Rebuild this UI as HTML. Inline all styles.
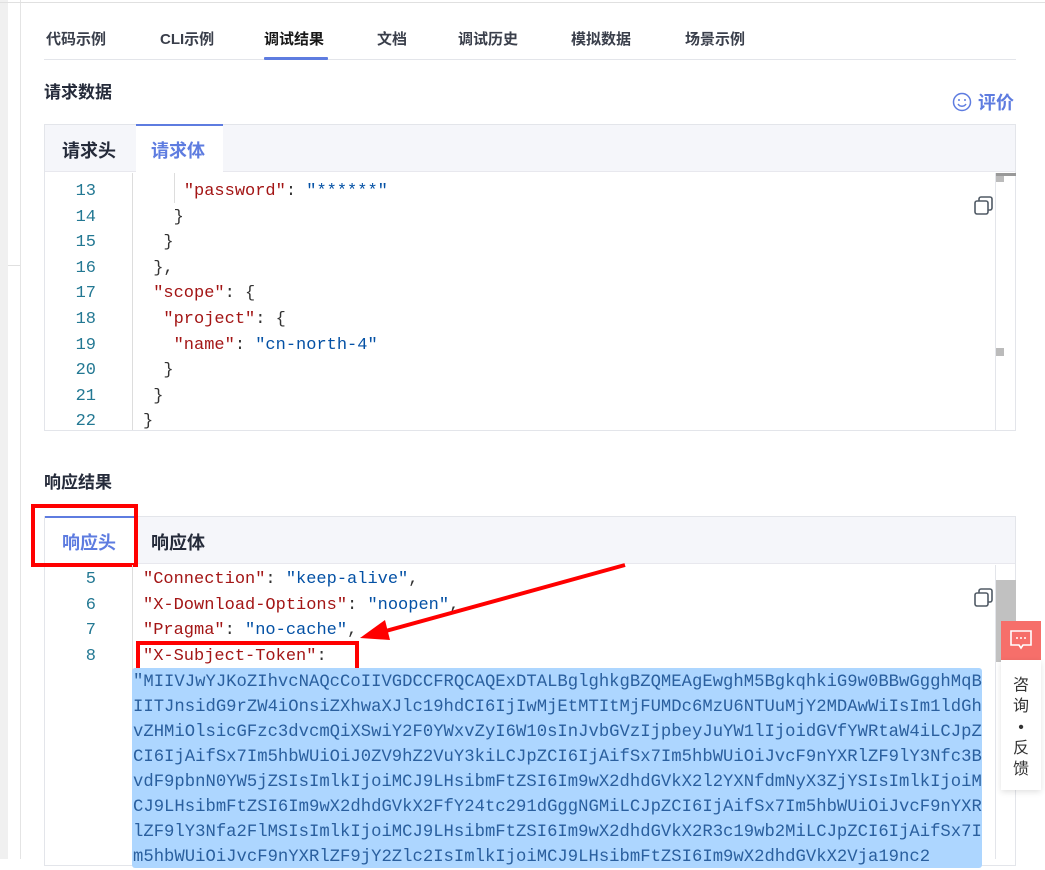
<!DOCTYPE html>
<html><head><meta charset="utf-8"><style>
*{margin:0;padding:0;box-sizing:border-box}
body{width:1045px;height:859px;overflow:hidden;background:#fff;position:relative;font-family:"Liberation Sans","Noto Sans CJK SC",sans-serif;color:#252b3a}
.a{position:absolute}
.mono{font-family:"Liberation Mono","DejaVu Sans Mono",monospace;font-size:17px;white-space:pre}
.ln{position:absolute;width:52px;text-align:right;left:44px;color:#237893;font-family:"Liberation Mono",monospace;font-size:17px}
.k{color:#a31515}.s{color:#0451a5}.p{color:#333}
.tab{position:absolute;top:28px;font-size:15px;color:#3a3f4b;font-weight:bold}
</style></head><body>
<div class="a" style="left:0;top:0;width:8px;height:859px;background:#f0f0f0"></div>
<div class="a" style="left:20px;top:0;width:1px;height:859px;background:#e4e4e4"></div>
<div class="a" style="left:0;top:2px;width:1045px;height:1px;background:#e0e0e0"></div>
<div class="a" style="left:8px;top:265px;width:12px;height:1px;background:#e0e0e0"></div>

<div class="tab" style="left:46px">代码示例</div>
<div class="tab" style="left:160px">CLI示例</div>
<div class="tab" style="left:264px;color:#191919">调试结果</div>
<div class="tab" style="left:377px">文档</div>
<div class="tab" style="left:458px">调试历史</div>
<div class="tab" style="left:571px">模拟数据</div>
<div class="tab" style="left:685px">场景示例</div>
<div class="a" style="left:44px;top:59px;width:972px;height:1px;background:#e3e5ea"></div>
<div class="a" style="left:264px;top:57px;width:64px;height:3px;background:#5e7ce0;border-radius:1px"></div>

<div class="a" style="left:44px;top:78px;font-size:17px;font-weight:bold">请求数据</div>
<div class="a" style="left:952px;top:89px;font-size:18px;font-weight:bold;color:#5e7ce0;display:flex;align-items:center">
<svg width="20" height="20" viewBox="0 0 20 20" style="margin-right:6px"><circle cx="10" cy="10" r="8.5" fill="none" stroke="#5e7ce0" stroke-width="1.5"/><circle cx="7" cy="8" r="1" fill="#5e7ce0"/><circle cx="13" cy="8" r="1" fill="#5e7ce0"/><path d="M6 12c2 3 6 3 8 0" fill="none" stroke="#5e7ce0" stroke-width="1.5"/></svg>评价</div>

<!-- request panel -->
<div class="a" style="left:44px;top:124px;width:972px;height:307px;border:1px solid #e3e5ea;background:#fff"></div>
<div class="a" style="left:45px;top:125px;width:970px;height:47px;background:#f5f6fa;border-bottom:1px solid #e8e8ee"></div>
<div class="a" style="left:136px;top:124px;width:87px;height:48px;background:#fff;border-top:2px solid #5e7ce0"></div>
<div class="a" style="left:62px;top:137px;font-size:18px;font-weight:bold;color:#252b3a">请求头</div>
<div class="a" style="left:151px;top:137px;font-size:18px;font-weight:bold;color:#5e7ce0">请求体</div>
<div class="a" style="left:132px;top:173px;width:1px;height:257px;background:#ddd"></div>
<div class="a" style="left:174px;top:173px;width:1px;height:30px;background:#ddd"></div>
<div class="a" style="left:995px;top:173px;width:1px;height:257px;background:#e3e5ea"></div>
<div class="a" style="left:996px;top:173px;width:20px;height:3px;background:#999"></div>
<div class="a" style="left:996px;top:176px;width:8px;height:6px;background:#bbb"></div>
<div class="a" style="left:996px;top:348px;width:8px;height:8px;background:#bbb"></div>
<svg class="a" style="left:973px;top:195px" width="22" height="22" viewBox="0 0 22 22"><rect x="2" y="6" width="13" height="13" rx="2" fill="none" stroke="#505a65" stroke-width="1.6"/><path d="M6 6V4a2 2 0 0 1 2-2h9a2 2 0 0 1 2 2v9a2 2 0 0 1-2 2h-2" fill="none" stroke="#505a65" stroke-width="1.6"/></svg>
<div class="ln" style="top:179px;line-height:25.6px">13<br>14<br>15<br>16<br>17<br>18<br>19<br>20<br>21<br>22</div>
<div class="a mono" style="left:143px;top:179px;line-height:25.6px"><span class="p">    </span><span class="k">"password"</span><span class="p">: </span><span class="s">"******"</span>
<span class="p">   }</span>
<span class="p">  }</span>
<span class="p"> },</span>
<span class="p"> </span><span class="k">"scope"</span><span class="p">: {</span>
<span class="p">  </span><span class="k">"project"</span><span class="p">: {</span>
<span class="p">   </span><span class="k">"name"</span><span class="p">: </span><span class="s">"cn-north-4"</span>
<span class="p">  }</span>
<span class="p"> }</span>
<span class="p">}</span></div>

<div class="a" style="left:44px;top:468px;font-size:17px;font-weight:bold">响应结果</div>

<!-- response panel -->
<div class="a" style="left:44px;top:516px;width:972px;height:350px;border:1px solid #e3e5ea;background:#fff"></div>
<div class="a" style="left:45px;top:517px;width:970px;height:47px;background:#f5f6fa;border-bottom:1px solid #e8e8ee"></div>
<div class="a" style="left:45px;top:516px;width:91px;height:48px;background:#fff;border-top:2px solid #5e7ce0"></div>
<div class="a" style="left:62px;top:529px;font-size:18px;font-weight:bold;color:#5e7ce0">响应头</div>
<div class="a" style="left:151px;top:529px;font-size:18px;font-weight:bold;color:#252b3a">响应体</div>
<div class="a" style="left:31px;top:504px;width:107px;height:63px;border:4px solid #f00"></div>
<div class="a" style="left:132px;top:565px;width:1px;height:294px;background:#ddd"></div>
<div class="a" style="left:995px;top:565px;width:1px;height:294px;background:#e3e5ea"></div>
<div class="a" style="left:996px;top:580px;width:20px;height:82px;background:#c1c1c1"></div>
<svg class="a" style="left:973px;top:587px" width="22" height="22" viewBox="0 0 22 22"><rect x="2" y="6" width="13" height="13" rx="2" fill="none" stroke="#505a65" stroke-width="1.6"/><path d="M6 6V4a2 2 0 0 1 2-2h9a2 2 0 0 1 2 2v9a2 2 0 0 1-2 2h-2" fill="none" stroke="#505a65" stroke-width="1.6"/></svg>
<div class="ln" style="top:567px;line-height:25.7px">5<br>6<br>7<br>8</div>
<div class="a mono" style="left:143px;top:567px;line-height:25.7px"><span class="k">"Connection"</span><span class="p">: </span><span class="s">"keep-alive"</span><span class="p">,</span>
<span class="k">"X-Download-Options"</span><span class="p">: </span><span class="s">"noopen"</span><span class="p">,</span>
<span class="k">"Pragma"</span><span class="p">: </span><span class="s">"no-cache"</span><span class="p">,</span>
<span class="k">"X-Subject-Token"</span><span class="p">:</span></div>
<div class="a" style="left:136px;top:641px;width:223px;height:31px;border:4px solid #f00"></div>
<div class="a" style="left:132px;top:668px;width:850px;height:200px;background:#add6ff;border-radius:3px"></div>
<div class="a mono" style="left:133px;top:670px;line-height:25px;color:#2a5f9e;font-size:17.25px">"MIIVJwYJKoZIhvcNAQcCoIIVGDCCFRQCAQExDTALBglghkgBZQMEAgEwghM5BgkqhkiG9w0BBwGgghMqB
IITJnsidG9rZW4iOnsiZXhwaXJlc19hdCI6IjIwMjEtMTItMjFUMDc6MzU6NTUuMjY2MDAwWiIsIm1ldGh
vZHMiOlsicGFzc3dvcmQiXSwiY2F0YWxvZyI6W10sInJvbGVzIjpbeyJuYW1lIjoidGVfYWRtaW4iLCJpZ
CI6IjAifSx7Im5hbWUiOiJ0ZV9hZ2VuY3kiLCJpZCI6IjAifSx7Im5hbWUiOiJvcF9nYXRlZF9lY3Nfc3B
vdF9pbnN0YW5jZSIsImlkIjoiMCJ9LHsibmFtZSI6Im9wX2dhdGVkX2l2YXNfdmNyX3ZjYSIsImlkIjoiM
CJ9LHsibmFtZSI6Im9wX2dhdGVkX2FfY24tc291dGggNGMiLCJpZCI6IjAifSx7Im5hbWUiOiJvcF9nYXR
lZF9lY3Nfa2FlMSIsImlkIjoiMCJ9LHsibmFtZSI6Im9wX2dhdGVkX2R3c19wb2MiLCJpZCI6IjAifSx7I
m5hbWUiOiJvcF9nYXRlZF9jY2Zlc2IsImlkIjoiMCJ9LHsibmFtZSI6Im9wX2dhdGVkX2Vja19nc2</div>

<!-- arrow -->
<svg class="a" style="left:0;top:0" width="1045" height="859"><line x1="625" y1="565" x2="375" y2="634" stroke="#f00" stroke-width="4"/><path d="M360 638 L385 620 L390 640 Z" fill="#f00"/></svg>

<!-- feedback -->
<div class="a" style="left:1001px;top:621px;width:40px;height:39px;background:#f66f6a"></div>
<svg class="a" style="left:1009px;top:629px" width="24" height="22" viewBox="0 0 24 22"><path d="M2 2h20v14H14l-2 3-2-3H2z" fill="none" stroke="#fff" stroke-width="1.6"/><circle cx="8" cy="9" r="1" fill="#fff"/><circle cx="12" cy="9" r="1" fill="#fff"/><circle cx="16" cy="9" r="1" fill="#fff"/></svg>
<div class="a" style="left:1001px;top:660px;width:40px;height:130px;background:#fff;box-shadow:0 2px 6px rgba(0,0,0,.12)"></div>
<div class="a" style="left:1011px;top:675px;width:20px;font-size:16px;line-height:21px;text-align:center;color:#333">咨<br>询<br>•<br>反<br>馈</div>
</body></html>
